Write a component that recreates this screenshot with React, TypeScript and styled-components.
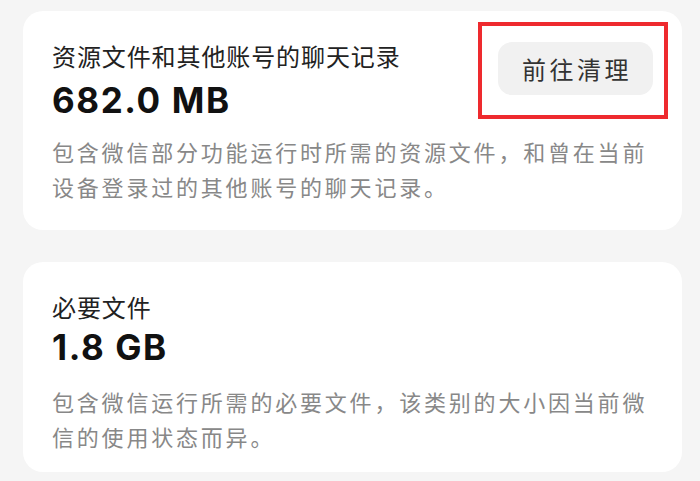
import * as React from "react";
import styled, { createGlobalStyle } from "styled-components";

const GlobalStyle = createGlobalStyle`
	html, body {
		margin: 0;
		padding: 0;
		background: #f5f5f5;
	}
	body {
		font-family: "Noto Sans CJK SC", "Noto Sans", sans-serif;
	}
`;

const StyledPage = styled.div`
	width: 700px;
	height: 481px;
	overflow: hidden;
	box-sizing: border-box;
	padding: 11px 18px 0 23px;
	display: flex;
	flex-direction: column;
	gap: 32px;
`;

const StyledCard = styled.div<{ $top: number; $bottom: number }>`
	position: relative;
	background: #ffffff;
	border-radius: 20px;
	padding: ${(p) => p.$top}px 29px ${(p) => p.$bottom}px;
`;

const StyledHeader = styled.div`
	display: flex;
	justify-content: space-between;
	align-items: flex-start;
`;

const StyledTitle = styled.div`
	font-size: 24px;
	line-height: 32px;
	letter-spacing: 0.9px;
	color: #222222;
`;

const StyledSize = styled.div<{ $gap: number }>`
	margin-top: ${(p) => p.$gap}px;
	font-family: Inter, "Noto Sans", sans-serif;
	font-weight: 700;
	font-size: 35px;
	line-height: 40px;
	letter-spacing: 1.6px;
	color: #111111;
`;

const StyledDesc = styled.div<{ $gap: number }>`
	margin-top: ${(p) => p.$gap}px;
	font-size: 22px;
	line-height: 35px;
	letter-spacing: 2.8px;
	color: #888888;
`;

const StyledButton = styled.button`
	margin-top: 2px;
	width: 155px;
	height: 53px;
	border: none;
	border-radius: 14px;
	background: #f1f1f1;
	font-family: "Noto Sans CJK SC", sans-serif;
	font-size: 24px;
	letter-spacing: 3.5px;
	padding: 0 0 0 3px;
	color: #333333;
`;

const StyledMark = styled.div`
	position: absolute;
	left: 455px;
	top: 11px;
	width: 182px;
	height: 89px;
	border: 4px solid #ee2a2e;
`;

const App: React.FC = () => {
	return (
		<>
			<GlobalStyle />
			<StyledPage>
				<StyledCard $top={29} $bottom={26}>
					<StyledHeader>
						<div>
							<StyledTitle>资源文件和其他账号的聊天记录</StyledTitle>
							<StyledSize $gap={8}>682.0 MB</StyledSize>
						</div>
						<StyledButton>前往清理</StyledButton>
					</StyledHeader>
					<StyledDesc $gap={14}>
						包含微信部分功能运行时所需的资源文件，和曾在当前设备登录过的其他账号的聊天记录。
					</StyledDesc>
					<StyledMark />
				</StyledCard>
				<StyledCard $top={29} $bottom={18}>
					<StyledTitle>必要文件</StyledTitle>
					<StyledSize $gap={4}>1.8 GB</StyledSize>
					<StyledDesc $gap={17}>
						包含微信运行所需的必要文件，该类别的大小因当前微信的使用状态而异。
					</StyledDesc>
				</StyledCard>
			</StyledPage>
		</>
	);
};

export default App;
